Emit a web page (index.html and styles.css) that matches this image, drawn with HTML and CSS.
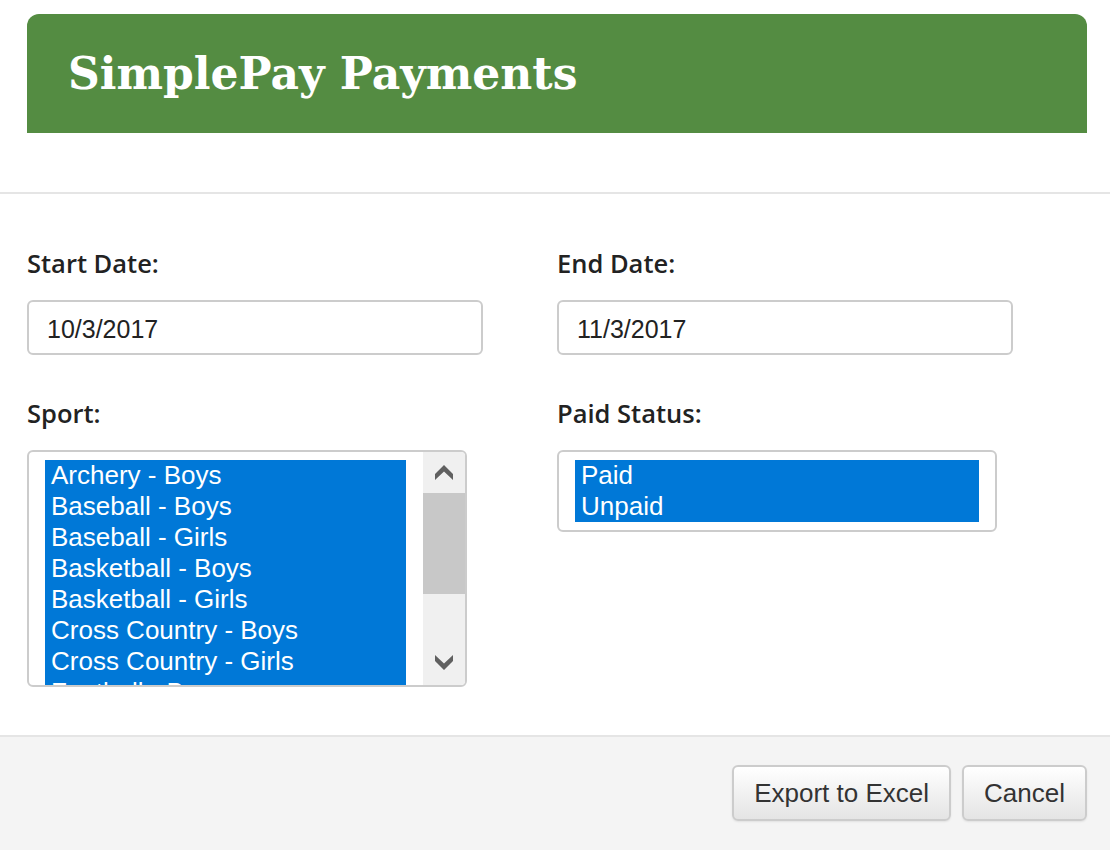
FILE: index.html
```html
<!DOCTYPE html>
<html>
<head>
<meta charset="utf-8">
<link rel="stylesheet" href="styles.css">
</head>
<body>
<div class="modal">
  <div class="modal-top">
    <div class="banner"><h1 class="title">SimplePay Payments</h1></div>
  </div>
  <div class="modal-body">
    <div class="field">
      <div class="label">Start Date:</div>
      <div class="input">10/3/2017</div>
    </div>
    <div class="field">
      <div class="label">End Date:</div>
      <div class="input">11/3/2017</div>
    </div>
    <div class="field">
      <div class="label">Sport:</div>
      <div class="listbox sport">
        <div class="options">
          <div class="opt">Archery - Boys</div>
          <div class="opt">Baseball - Boys</div>
          <div class="opt">Baseball - Girls</div>
          <div class="opt">Basketball - Boys</div>
          <div class="opt">Basketball - Girls</div>
          <div class="opt">Cross Country - Boys</div>
          <div class="opt">Cross Country - Girls</div>
          <div class="opt">Football - Boys</div>
        </div>
        <div class="scrollbar">
          <div class="arrow up"><svg width="18" height="15" viewBox="0 0 18 15"><path d="M0 9 L9 0 L18 9 L18 15 L9 6.5 L0 15 Z" fill="#606060"/></svg></div>
          <div class="thumb"></div>
          <div class="track"></div>
          <div class="arrow down"><svg width="18" height="15" viewBox="0 0 18 15"><path d="M0 6 L9 15 L18 6 L18 0 L9 8.5 L0 0 Z" fill="#606060"/></svg></div>
        </div>
      </div>
    </div>
    <div class="field">
      <div class="label">Paid Status:</div>
      <div class="listbox status">
        <div class="options">
          <div class="opt">Paid</div>
          <div class="opt">Unpaid</div>
        </div>
      </div>
    </div>
  </div>
  <div class="modal-footer">
    <button class="btn">Export to Excel</button>
    <button class="btn">Cancel</button>
  </div>
</div>
</body>
</html>
```
FILE: styles.css
```css
html, body {
  margin: 0;
  padding: 0;
  background: #fff;
}
.modal {
  width: 1110px;
  height: 850px;
  display: flex;
  flex-direction: column;
  overflow: hidden;
}
.modal-top {
  height: 194px;
  box-sizing: border-box;
  padding: 14px 23px 0 27px;
  border-bottom: 2px solid #e5e5e5;
}
.banner {
  height: 119px;
  background: #548c42;
  border-radius: 12px 12px 0 0;
  padding-left: 41px;
  display: flex;
  align-items: center;
}
.title {
  margin: 0;
  font-family: "DejaVu Serif", serif;
  font-weight: bold;
  font-size: 44px;
  color: #fff;
  letter-spacing: 0;
}
.modal-body {
  height: 541px;
  box-sizing: border-box;
  padding: 52px 27px 0 27px;
  display: grid;
  grid-template-columns: 530px 1fr;
  grid-auto-rows: min-content;
  row-gap: 41px;
}
.label {
  font-family: "Open Sans", sans-serif;
  font-weight: 600;
  font-size: 25.5px;
  line-height: 34px;
  color: #222;
  margin-bottom: 20px;
}
.input {
  width: 456px;
  height: 55px;
  box-sizing: border-box;
  border: 2px solid #ccc;
  border-radius: 6px;
  padding: 2px 0 0 18px;
  font-family: "Liberation Sans", Arial, sans-serif;
  font-size: 25px;
  line-height: 51px;
  color: #222;
  overflow: hidden;
}
.listbox {
  width: 440px;
  box-sizing: border-box;
  border: 2px solid #ccc;
  border-radius: 6px;
  display: flex;
  overflow: hidden;
}
.listbox.sport {
  height: 237px;
  padding-left: 16px;
}
.listbox.status {
  height: 82px;
  padding: 8px 16px 8px 16px;
}
.sport .options {
  width: 361px;
  margin-top: 8px;
  margin-right: 17px;
  overflow: hidden;
}
.status .options {
  flex: 1;
}
.opt {
  background: #0078d7;
  color: #fff;
  font-family: "Liberation Sans", Arial, sans-serif;
  font-size: 26px;
  line-height: 31px;
  height: 31px;
  padding-left: 6px;
  white-space: nowrap;
}
.scrollbar {
  width: 42px;
  background: #f0f0f0;
  display: flex;
  flex-direction: column;
}
.arrow {
  display: flex;
  align-items: center;
  justify-content: center;
}
.arrow.up { height: 41px; padding-top: 0; box-sizing: border-box; }
.thumb {
  height: 101px;
  background: #c8c8c8;
}
.track { flex: 1; }
.arrow.down { height: 44px; padding-bottom: 2px; box-sizing: border-box; }
.modal-footer {
  flex: 1;
  border-top: 2px solid #e5e5e5;
  background: #f4f4f4;
  display: flex;
  justify-content: flex-end;
  align-items: flex-start;
  gap: 11px;
  padding: 28px 23px 0 0;
}
.btn {
  height: 56px;
  box-sizing: border-box;
  border: 2px solid #ccc;
  border-radius: 6px;
  background: linear-gradient(#ffffff, #e4e4e4);
  box-shadow: 0 1px 2px rgba(0,0,0,0.08);
  font-family: "Liberation Sans", Arial, sans-serif;
  font-size: 26px;
  color: #333;
  padding: 0 20px;
  margin: 0;
}
```
